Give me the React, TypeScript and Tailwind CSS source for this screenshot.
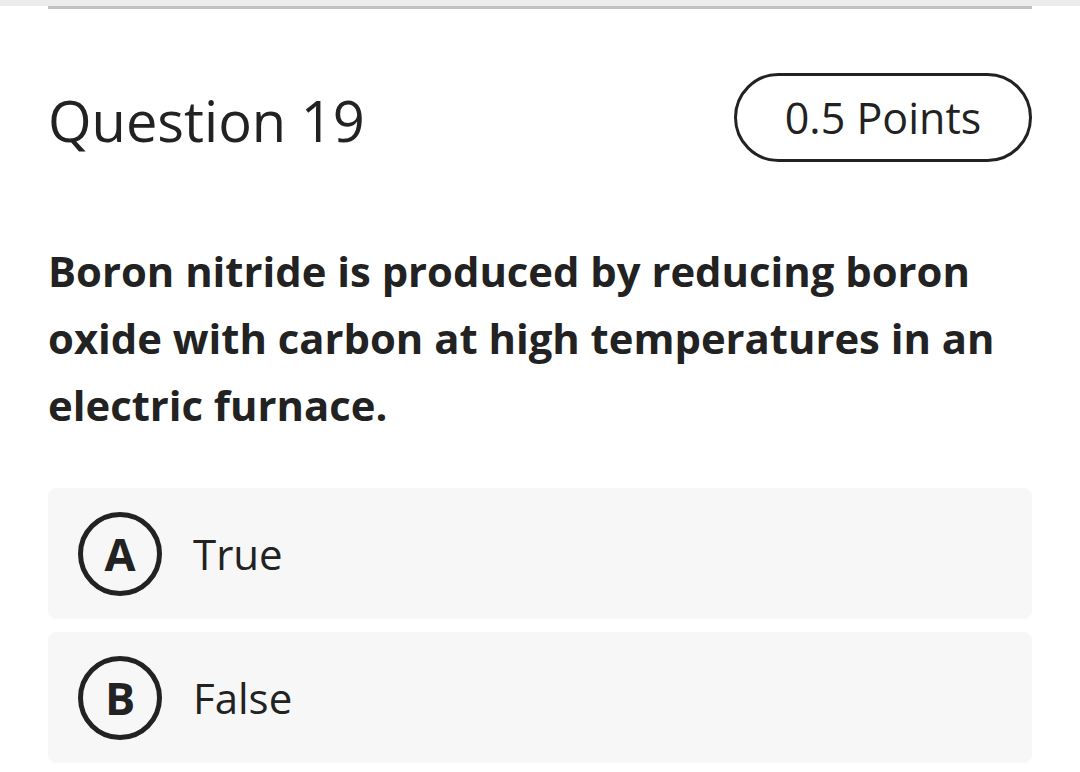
export default function App() {
  const options = [
    { key: 'A', label: 'True' },
    { key: 'B', label: 'False' },
  ];

  return (
    <div className="w-[1080px] h-[772px] overflow-hidden bg-white text-[#222222]" style={{ fontFamily: '"Open Sans", "Noto Sans", sans-serif' }}>
      <div className="h-[6px] bg-[#ececec]" />
      <div className="mx-12 h-[3px] bg-[#c2c2c2]" />

      <div className="px-12">
        <div className="mt-[64px] flex items-center justify-between">
          <h1 className="text-[56px] leading-none font-medium mt-[4px]">Question 19</h1>
          <div className="w-[298px] h-[89px] rounded-full border-[3px] border-[#222222] flex items-center justify-center">
            <span className="text-[43px] leading-none">0.5 Points</span>
          </div>
        </div>

        <p className="mt-[75px] text-[41.8px] leading-[67px] font-bold">
          Boron nitride is produced by reducing boron oxide with carbon at high temperatures in an electric furnace.
        </p>

        <div className="mt-[50px] flex flex-col gap-[13px]">
          {options.map((o) => (
            <div key={o.key} className="h-[131px] rounded-[8px] bg-[#f7f7f7] flex items-center pl-[30px]">
              <div className="w-[84px] h-[84px] rounded-full border-[5px] border-[#222222] flex items-center justify-center">
                <span className="text-[45px] leading-none font-bold">{o.key}</span>
              </div>
              <span className="ml-[31px] text-[42px] leading-none">{o.label}</span>
            </div>
          ))}
        </div>
      </div>
    </div>
  );
}
